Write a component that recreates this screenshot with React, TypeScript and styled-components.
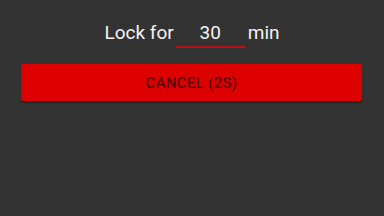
import React from "react";
import styled, { createGlobalStyle } from "styled-components";

const Global = createGlobalStyle`
  html, body { margin: 0; padding: 0; background: #333333; }
  body { font-family: Roboto, "Noto Sans", sans-serif; width: 384px; height: 216px; overflow: hidden; }
`;

const Page = styled.div`
  display: flex;
  flex-direction: column;
  padding-top: 21px;
`;

const Row = styled.div`
  display: flex;
  justify-content: center;
  align-items: flex-start;
  color: #f2f2f2;
  font-size: 19px;
  line-height: 23px;
`;

const Label = styled.span<{ $pad?: number }>`
  padding-left: ${(p) => p.$pad ?? 0}px;
`;

const Field = styled.div`
  width: 69px;
  margin-left: 2px;
  text-align: center;
  padding-bottom: 2px;
  border-bottom: 2px solid #b5121b;
`;

const Button = styled.button`
  margin: 16px 0 0 21px;
  width: 341px;
  height: 37px;
  border: none;
  border-radius: 2px;
  background: #dd0000;
  color: rgba(0, 0, 0, 0.62);
  font-family: Roboto, "Noto Sans", sans-serif;
  font-weight: 500;
  font-size: 15px;
  letter-spacing: 0.3px;
  text-transform: uppercase;
  box-shadow: 0 2px 2px rgba(0, 0, 0, 0.35);
  padding: 0;
`;

export default function App() {
  return (
    <>
      <Global />
      <Page>
        <Row>
          <Label>Lock for</Label>
          <Field>30</Field>
          <Label $pad={3}>min</Label>
        </Row>
        <Button>Cancel (2s)</Button>
      </Page>
    </>
  );
}
